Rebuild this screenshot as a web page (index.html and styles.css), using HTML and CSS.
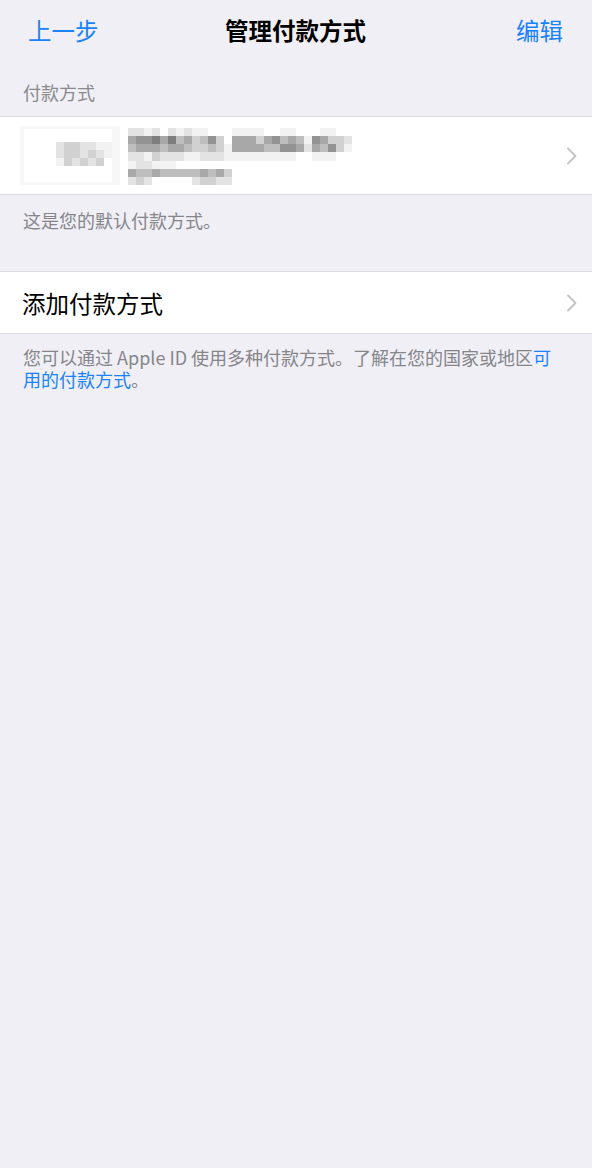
FILE: index.html
```html
<!DOCTYPE html>
<html lang="zh-CN">
<head>
    <meta charset="UTF-8">
    <meta name="viewport" content="width=device-width, initial-scale=1.0">
    <title>管理付款方式</title>
    <link rel="stylesheet" href="styles.css">
</head>
<body>
    <header class="nav">
        <a class="nav-btn nav-left" href="#">上一步</a>
        <h1 class="nav-title">管理付款方式</h1>
        <a class="nav-btn nav-right" href="#">编辑</a>
    </header>

    <div class="section-header">付款方式</div>
    <div class="group">
        <a class="row row-card" href="#">
            <div class="card-thumb">
                <div class="card-thumb-inner">
                    <div class="mosaic thumb-mosaic">
                        <div class="mr"><i class="s2"></i><i class="s3"></i><i class="s3"></i><i class="s2"></i><i class="s2"></i><i class="s1"></i><i class="s1"></i></div>
                        <div class="mr"><i class="s2"></i><i class="s3"></i><i class="s3"></i><i class="s2"></i><i class="s3"></i><i class="s2"></i><i class="s1"></i></div>
                        <div class="mr"><i class="s1"></i><i class="s3"></i><i class="s2"></i><i class="s3"></i><i class="s2"></i><i class="s3"></i><i class="s0"></i></div>
                    </div>
                </div>
            </div>
            <div class="mosaic card-info">
                <div class="mr"><i class="s2"></i><i class="s2"></i><i class="s1"></i><i class="s2"></i><i class="s0"></i><i class="s2"></i><i class="s1"></i><i class="s2"></i><i class="s1"></i><i class="s1"></i><i class="s0"></i><i class="s0"></i><i class="s0"></i><i class="s1"></i><i class="s1"></i><i class="s1"></i><i class="s1"></i><i class="s0"></i><i class="s0"></i><i class="s1"></i><i class="s1"></i><i class="s0"></i><i class="s0"></i><i class="s0"></i><i class="s1"></i><i class="s1"></i><i class="s0"></i><i class="s0"></i><i class="s0"></i></div>
                <div class="mr"><i class="s5"></i><i class="s6"></i><i class="s6"></i><i class="s7"></i><i class="s5"></i><i class="s7"></i><i class="s4"></i><i class="s5"></i><i class="s3"></i><i class="s4"></i><i class="s6"></i><i class="s3"></i><i class="s0"></i><i class="s5"></i><i class="s5"></i><i class="s5"></i><i class="s3"></i><i class="s5"></i><i class="s6"></i><i class="s4"></i><i class="s5"></i><i class="s4"></i><i class="s1"></i><i class="s6"></i><i class="s5"></i><i class="s3"></i><i class="s3"></i><i class="s2"></i><i class="s0"></i></div>
                <div class="mr"><i class="s4"></i><i class="s5"></i><i class="s5"></i><i class="s5"></i><i class="s4"></i><i class="s5"></i><i class="s5"></i><i class="s4"></i><i class="s3"></i><i class="s3"></i><i class="s4"></i><i class="s3"></i><i class="s1"></i><i class="s5"></i><i class="s5"></i><i class="s5"></i><i class="s5"></i><i class="s4"></i><i class="s4"></i><i class="s6"></i><i class="s6"></i><i class="s5"></i><i class="s2"></i><i class="s5"></i><i class="s4"></i><i class="s6"></i><i class="s3"></i><i class="s1"></i><i class="s0"></i></div>
                <div class="mr"><i class="s2"></i><i class="s2"></i><i class="s1"></i><i class="s3"></i><i class="s2"></i><i class="s2"></i><i class="s2"></i><i class="s1"></i><i class="s1"></i><i class="s2"></i><i class="s2"></i><i class="s2"></i><i class="s1"></i><i class="s1"></i><i class="s1"></i><i class="s1"></i><i class="s1"></i><i class="s1"></i><i class="s1"></i><i class="s1"></i><i class="s1"></i><i class="s0"></i><i class="s0"></i><i class="s1"></i><i class="s1"></i><i class="s1"></i><i class="s0"></i><i class="s0"></i><i class="s0"></i></div>
                <div class="mr"><i class="s1"></i><i class="s2"></i><i class="s2"></i><i class="s1"></i><i class="s1"></i><i class="s1"></i><i class="s0"></i><i class="s0"></i><i class="s0"></i><i class="s0"></i><i class="s0"></i><i class="s0"></i><i class="s0"></i></div>
                <div class="mr"><i class="s5"></i><i class="s4"></i><i class="s4"></i><i class="s5"></i><i class="s4"></i><i class="s4"></i><i class="s4"></i><i class="s4"></i><i class="s4"></i><i class="s5"></i><i class="s4"></i><i class="s5"></i><i class="s3"></i></div>
                <div class="mr"><i class="s2"></i><i class="s3"></i><i class="s2"></i><i class="s0"></i><i class="s0"></i><i class="s0"></i><i class="s0"></i><i class="s0"></i><i class="s2"></i><i class="s3"></i><i class="s3"></i><i class="s2"></i><i class="s2"></i></div>
            </div>
            <svg class="chevron" viewBox="0 0 12 18" width="12" height="18">
                <path d="M2 1.5 L9.5 9 L2 16.5" fill="none" stroke="currentColor" stroke-width="2" stroke-linecap="round" stroke-linejoin="round"/>
            </svg>
        </a>
    </div>
    <p class="section-footer">这是您的默认付款方式。</p>

    <div class="group group-spaced">
        <a class="row row-add" href="#">
            <span class="row-label">添加付款方式</span>
            <svg class="chevron" viewBox="0 0 12 18" width="12" height="18">
                <path d="M2 1.5 L9.5 9 L2 16.5" fill="none" stroke="currentColor" stroke-width="2" stroke-linecap="round" stroke-linejoin="round"/>
            </svg>
        </a>
    </div>
    <p class="section-footer section-footer-tight">您可以通过 Apple ID 使用多种付款方式。了解在您的国家或地区<a class="link" href="#">可用的付款方式</a>。</p>
</body>
</html>
```

FILE: styles.css
```css
body {
    margin: 0;
    min-height: 100vh;
    background-color: #f0eff5;
    font-family: "Noto Sans CJK SC", "Noto Sans", sans-serif;
    color: #000;
}

a {
    text-decoration: none;
    color: inherit;
}

.nav {
    height: 60px;
    display: grid;
    grid-template-columns: 1fr auto 1fr;
    align-items: center;
    padding: 0 29px 0 28px;
}

.nav-btn {
    font-size: 23.5px;
    color: #1a82fb;
    line-height: 28px;
}

.nav-right {
    justify-self: end;
}

.nav-title {
    margin: 0;
    font-size: 23.5px;
    font-weight: 700;
    line-height: 28px;
}

.section-header {
    margin-top: 21px;
    padding: 0 23px 13px;
    font-size: 18px;
    line-height: 22px;
    color: #8a8a8e;
}

.group {
    background-color: #fff;
    border-top: 1px solid #dcdce0;
    border-bottom: 1px solid #dcdce0;
}

.group-spaced {
    margin-top: 40px;
}

.row {
    display: flex;
    align-items: center;
    padding-right: 14px;
}

.row-card {
    height: 77px;
    padding-left: 20px;
}

.row-add {
    height: 61px;
    padding-left: 22px;
}

.row-label {
    flex: 1;
    font-size: 23.5px;
    line-height: 28px;
}

.chevron {
    color: #c4c4c9;
    flex-shrink: 0;
}

.card-info + .chevron {
    margin-left: auto;
}

.card-thumb {
    width: 100px;
    height: 59px;
    padding: 3px 8px 3px 4px;
    box-sizing: border-box;
    background-color: #f7f7f7;
    margin-right: 8px;
}

.card-thumb-inner {
    height: 100%;
    background-color: #fff;
    display: flex;
    justify-content: flex-end;
    align-items: flex-start;
    padding-top: 13px;
    box-sizing: border-box;
}

.mosaic {
    display: flex;
    flex-direction: column;
}

.card-info {
    margin-top: 2px;
}

.mr {
    display: flex;
}

.mr i {
    display: block;
    width: 8px;
    height: 8px;
}

.card-info .mr:nth-child(4) i {
    height: 9px;
}

.s0 { background-color: #fff; }
.s1 { background-color: #f2f2f2; }
.s2 { background-color: #e3e3e3; }
.s3 { background-color: #d1d1d1; }
.s4 { background-color: #bebebe; }
.s5 { background-color: #a8a8a8; }
.s6 { background-color: #939393; }
.s7 { background-color: #7e7e7e; }

.section-footer {
    margin: 14px 0 0;
    padding: 0 23px;
    font-size: 18px;
    line-height: 22px;
    color: #85858a;
}

.section-footer-tight {
    margin-top: 12px;
}

.link {
    color: #1a82fb;
}
```
